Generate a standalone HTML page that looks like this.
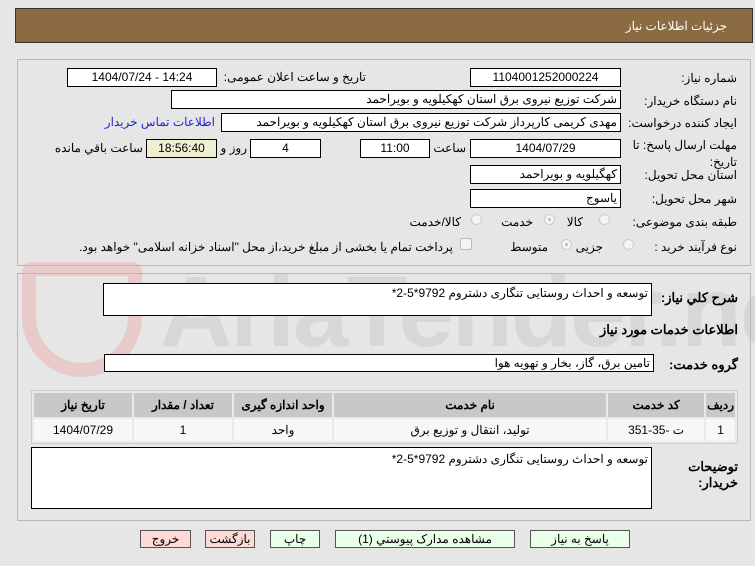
<!DOCTYPE html>
<html><head><meta charset="utf-8"><style>
body{margin:0;width:755px;height:566px;background:#e6e6e6;font-family:"Liberation Sans","Noto Sans CJK SC",sans-serif;font-size:12px;color:#000;position:relative;overflow:hidden}
.a{position:absolute;white-space:nowrap}
.box{position:absolute;background:#fff;border:1px solid #000;box-sizing:border-box;font-size:12px;line-height:16px;text-align:center}
.r{direction:rtl;text-align:right;padding-right:3px}
.lbl{position:absolute;direction:rtl;white-space:nowrap;font-size:12px}
.panel{position:absolute;border:1px solid #b8b8b8;box-sizing:border-box}
.rad{position:absolute;width:11px;height:11px;border-radius:50%;border:1px solid #ccc;background:#f4f4f4;box-sizing:border-box}
.rad.on::after{content:"";position:absolute;left:3px;top:3px;width:3px;height:3px;border-radius:50%;background:#bbb}
table{position:absolute;border-collapse:separate;border-spacing:2px;background:#e9e9e9;border:1px solid #ccc}
th{background:#c8c8c8;font-weight:bold;height:22px;font-size:12px}
td{background:#f7f7f7;height:20px;text-align:center;font-size:12px}
.btn{position:absolute;top:530px;height:18px;border:1px solid #555;box-sizing:border-box;text-align:center;line-height:16px;font-size:12px;background:#eaffea;direction:rtl}
.btn.p{background:#ffd8d8}
.wm{position:absolute;left:0;top:0;width:755px;height:566px;overflow:hidden}
</style></head><body>
<div class="a" style="left:15px;top:8px;width:738px;height:35px;background:#8b6b42;border:1px solid #333;box-sizing:border-box"></div>
<div class="lbl" style="right:28px;top:19px;color:#fff">جزئیات اطلاعات نیاز</div>

<div class="wm">
<div class="a" style="left:160px;top:255px;font-size:100px;font-weight:bold;color:#ccc;opacity:.55;letter-spacing:-2px">AriaTender.net</div>
<div class="a" style="left:22px;top:262px;width:120px;height:115px;border:14px solid #e8bdbd;border-radius:10px 10px 60px 60px;box-sizing:border-box;opacity:.7"></div>
</div>

<div class="panel" style="left:17px;top:59px;width:734px;height:207px"></div>
<div class="lbl" style="right:18px;top:71px">شماره نیاز:</div>
<div class="box" style="left:470px;top:68px;width:151px;height:19px">1104001252000224</div>
<div class="lbl" style="right:389px;top:70px">تاریخ و ساعت اعلان عمومی:</div>
<div class="box" style="left:67px;top:68px;width:150px;height:19px">1404/07/24 - 14:24</div>
<div class="lbl" style="right:18px;top:94px">نام دستگاه خریدار:</div>
<div class="box r" style="left:171px;top:90px;width:450px;height:19px">شرکت توزیع نیروی برق استان کهکیلویه و بویراحمد</div>
<div class="lbl" style="right:18px;top:116px">ایجاد کننده درخواست:</div>
<div class="box r" style="left:221px;top:113px;width:400px;height:19px">مهدی کریمی کارپرداز شرکت توزیع نیروی برق استان کهکیلویه و بویراحمد</div>
<div class="lbl" style="right:540px;top:115px;color:#2222dd">اطلاعات تماس خریدار</div>
<div class="lbl" style="right:18px;top:137px;line-height:17px">مهلت ارسال پاسخ: تا<br>تاریخ:</div>
<div class="box" style="left:470px;top:139px;width:151px;height:19px">1404/07/29</div>
<div class="lbl" style="right:289px;top:141px">ساعت</div>
<div class="box" style="left:360px;top:139px;width:70px;height:19px">11:00</div>
<div class="box" style="left:250px;top:139px;width:71px;height:19px">4</div>
<div class="lbl" style="right:508px;top:141px">روز و</div>
<div class="box" style="left:146px;top:139px;width:71px;height:19px;background:#efefd2">18:56:40</div>
<div class="lbl" style="right:612px;top:141px">ساعت باقي مانده</div>
<div class="lbl" style="right:18px;top:168px">استان محل تحویل:</div>
<div class="box r" style="left:470px;top:165px;width:151px;height:19px">کهگیلویه و بویراحمد</div>
<div class="lbl" style="right:18px;top:192px">شهر محل تحویل:</div>
<div class="box r" style="left:470px;top:189px;width:151px;height:19px">یاسوج</div>
<div class="lbl" style="right:18px;top:215px">طبقه بندی موضوعی:</div>
<div class="rad" style="left:599px;top:214px"></div><div class="lbl" style="right:172px;top:215px">کالا</div>
<div class="rad on" style="left:544px;top:214px"></div><div class="lbl" style="right:222px;top:215px">خدمت</div>
<div class="rad" style="left:471px;top:214px"></div><div class="lbl" style="right:294px;top:215px">کالا/خدمت</div>
<div class="lbl" style="right:18px;top:240px">نوع فرآیند خرید :</div>
<div class="rad" style="left:623px;top:239px"></div><div class="lbl" style="right:152px;top:240px">جزیی</div>
<div class="rad on" style="left:561px;top:239px"></div><div class="lbl" style="right:207px;top:240px">متوسط</div>
<div class="a" style="left:460px;top:238px;width:12px;height:12px;border:1px solid #bbb;background:#f4f4f4;border-radius:2px;box-sizing:border-box"></div>
<div class="lbl" style="right:302px;top:240px">پرداخت تمام یا بخشی از مبلغ خرید،از محل "اسناد خزانه اسلامی" خواهد بود.</div>

<div class="panel" style="left:17px;top:273px;width:734px;height:248px"></div>
<div class="lbl" style="right:17px;top:290px;font-weight:bold;font-size:13px">شرح کلي نیاز:</div>
<div class="box r" style="left:103px;top:283px;width:549px;height:33px;line-height:18px">توسعه و احداث روستایی تنگاری دشتروم 9792*5-2*</div>
<div class="lbl" style="right:17px;top:322px;font-weight:bold;font-size:13px">اطلاعات خدمات مورد نیاز</div>
<div class="lbl" style="right:17px;top:357px;font-weight:bold;font-size:13px">گروه خدمت:</div>
<div class="box r" style="left:104px;top:354px;width:550px;height:18px">تامین برق، گاز، بخار و تهویه هوا</div>
<table style="left:31px;top:390px;width:707px;direction:rtl">
<tr><th style="width:26px">ردیف</th><th style="width:94px">کد خدمت</th><th>نام خدمت</th><th style="width:96px">واحد اندازه گیری</th><th style="width:96px">تعداد / مقدار</th><th style="width:96px">تاریخ نیاز</th></tr>
<tr><td>1</td><td>ت -35-351</td><td>تولید، انتقال و توزیع برق</td><td>واحد</td><td>1</td><td>1404/07/29</td></tr>
</table>
<div class="lbl" style="right:17px;top:459px;font-weight:bold;font-size:13px;line-height:16px;text-align:right">توضیحات<br>خریدار:</div>
<div class="box r" style="left:31px;top:447px;width:621px;height:62px;text-align:right;line-height:22px">توسعه و احداث روستایی تنگاری دشتروم 9792*5-2*</div>

<div class="btn p" style="left:140px;width:51px">خروج</div>
<div class="btn p" style="left:205px;width:50px">بازگشت</div>
<div class="btn" style="left:270px;width:50px">چاپ</div>
<div class="btn" style="left:335px;width:180px">مشاهده مدارک پیوستي (1)</div>
<div class="btn" style="left:530px;width:100px">پاسخ به نیاز</div>
</body></html>
